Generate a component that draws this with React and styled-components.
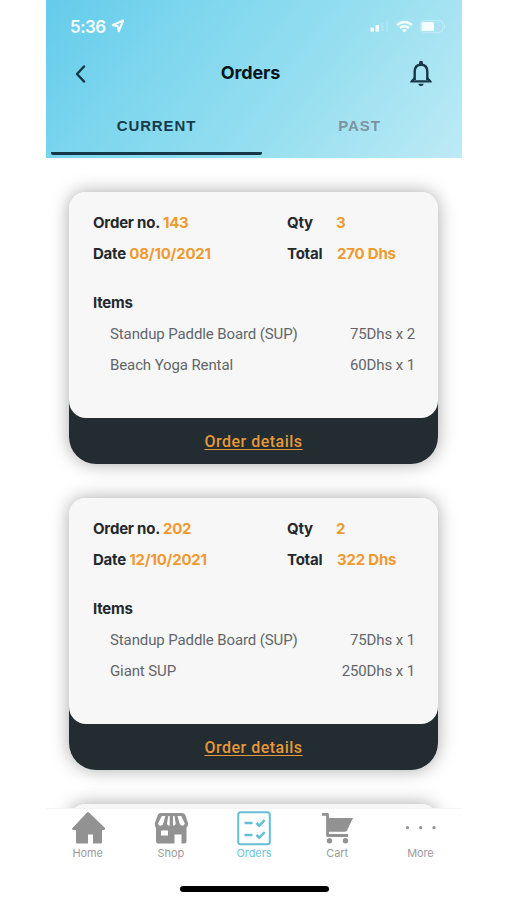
import React from "react";
import styled, { createGlobalStyle } from "styled-components";

const GlobalStyle = createGlobalStyle`
  *, *::before, *::after { box-sizing: border-box; }
  body { margin: 0; background: #fff; }
`;

const Page = styled.div`
  height: 900px;
  padding-left: 46px;
  background: #fff;
  overflow: hidden;
  font-family: Roboto, "Liberation Sans", sans-serif;
`;

const Phone = styled.main`
  display: flex;
  flex-direction: column;
  width: 416px;
  height: 900px;
`;

const Header = styled.header`
  flex: none;
  height: 158px;
  background: linear-gradient(128deg, #64cbea 0%, #7dd6ee 28%, #97dff0 62%, #bdeaf5 100%);
`;

const StatusBar = styled.div`
  display: flex;
  align-items: center;
  height: 52px;
  padding: 0 16px 0 24px;
  color: #f4fcff;
`;

const Clock = styled.span`
  width: 41px;
  padding-top: 1px;
  font: 600 17px/20px Inter, sans-serif;
  letter-spacing: -0.55px;
  white-space: nowrap;
`;

const StatusIcons = styled.div`
  display: flex;
  align-items: center;
  gap: 7px;
  margin-left: auto;
`;

const NavBar = styled.div`
  display: grid;
  grid-template-columns: 60px 1fr 60px;
  align-items: center;
  height: 42px;
  padding: 0 7px 0 0;
`;

const IconButton = styled.button`
  display: flex;
  justify-content: ${(p) => (p.$end ? "flex-end" : "flex-start")};
  padding: ${(p) => (p.$end ? "0 23px 0 0" : "2px 0 0 28px")};
  border: 0;
  background: none;
  color: #183848;
`;

const Title = styled.h1`
  margin: 0;
  font: 700 18px/24px Inter, sans-serif;
  letter-spacing: -0.15px;
  text-align: center;
  color: #07141c;
`;

const Tabs = styled.div`
  display: flex;
  height: 61px;
  padding: 0 5px;
`;

const Tab = styled.button`
  width: ${(p) => (p.$active ? "211px" : "195px")};
  padding: ${(p) => (p.$active ? "6px 0 0" : "3px 0 0")};
  border: 0;
  border-bottom: ${(p) => (p.$active ? "3px solid #153747" : "0")};
  border-radius: 0 0 2px 2px;
  background: none;
  font: 700 15px/18px "Liberation Sans", sans-serif;
  letter-spacing: 0.9px;
  color: ${(p) => (p.$active ? "#183b4b" : "#7f929e")};
`;

const OrderList = styled.section`
  flex: none;
  display: flex;
  flex-direction: column;
  gap: 34px;
  height: 650px;
  padding: 34px 24px 0 23px;
  overflow: hidden;
`;

const Card = styled.article`
  flex: none;
  width: 369px;
  height: 272px;
  border-radius: 17px 17px 27px 27px;
  background: linear-gradient(#f7f7f7 50%, #222c31 50%);
  box-shadow: 0 0 18px rgba(0, 0, 0, 0.34);
`;

const CardBody = styled.div`
  height: 226px;
  padding: 16px 23px 0 24px;
  border-radius: 17px;
  background: #f7f7f7;
`;

const Facts = styled.div`
  display: grid;
  grid-template-columns: 194px 1fr;
  margin-bottom: 18px;
`;

const Fact = styled.div`
  display: flex;
  font: 700 15px/30px Inter, sans-serif;
  height: 31px;
  letter-spacing: -0.21px;
  white-space: pre;
  color: #23292d;
`;

const FactLabel = styled.span`
  width: ${(p) => (p.$width ? `${p.$width}px` : "auto")};
`;

const FactValue = styled.span`
  color: #f0992f;
`;

const ItemsHeading = styled.h2`
  height: 31px;
  margin: 0;
  font: 700 15px/30px Inter, sans-serif;
  letter-spacing: -0.21px;
  color: #23292d;
`;

const ItemRow = styled.div`
  display: flex;
  justify-content: space-between;
  padding-left: 17px;
  font-size: 15px;
  line-height: 31px;
  letter-spacing: -0.11px;
  color: #62666a;
`;

const CardFooter = styled.div`
  display: flex;
  justify-content: center;
  height: 46px;
`;

const DetailsLink = styled.a`
  font: 500 16px/47px Roboto, sans-serif;
  letter-spacing: 0.5px;
  text-decoration: underline;
  text-decoration-thickness: 1px;
  text-underline-offset: 2px;
  text-decoration-skip-ink: none;
  color: #e6983a;
`;

const BottomBar = styled.nav`
  flex: none;
  display: grid;
  grid-template-columns: repeat(5, 1fr);
  height: 74px;
  border-top: 1px solid #f4f4f4;
  background: #fff;
`;

const BottomItem = styled.a`
  display: flex;
  flex-direction: column;
  align-items: center;
  padding-top: 2px;
  font: 400 11px/15px Inter, sans-serif;
  letter-spacing: -0.1px;
  color: ${(p) => (p.$active ? "#70c5da" : "#9b9b9b")};

  svg {
    display: block;
    color: ${(p) => (p.$active ? "#65bdd7" : "#929292")};
  }
`;

const HomeIndicator = styled.div`
  align-self: center;
  width: 149px;
  height: 6px;
  margin-top: 4px;
  border-radius: 3px;
  background: #000;
`;

const LocationIcon = () => (
  <svg width="14" height="14" viewBox="0 0 14 14" fill="none" stroke="currentColor" strokeWidth="2.2" strokeLinejoin="round">
    <path d="M12.2 1.600 1.800 6.100l5 1.100 1 5z" />
  </svg>
);

const SignalIcon = () => (
  <svg width="19" height="12" viewBox="0 0 19 12" fill="currentColor">
    <rect x="0.5" y="7.500" width="3.500" height="4.200" rx="1" />
    <rect x="5.500" y="5" width="3.700" height="6.700" rx="1" />
    <rect x="11" y="2.700" width="2.500" height="9" rx="1" opacity=".22" />
    <rect x="16" y="0" width="2.200" height="11.700" rx="1" opacity=".14" />
  </svg>
);

const WifiIcon = () => (
  <svg width="17" height="13" viewBox="0 0 17 13" fill="none" stroke="currentColor" strokeWidth="2.5">
    <path d="M1 5.100C5.200.9 11.800.9 16 5.100M4 8c2.500-2.400 6.500-2.400 9 0" />
    <path d="M6 9.800c1.500-1.300 3.500-1.300 5 0l-2.500 2.700z" fill="currentColor" stroke="none" />
  </svg>
);

const BatteryIcon = () => (
  <svg width="26" height="13" viewBox="0 0 26 13" fill="none">
    <rect x=".6" y=".6" width="22.300" height="11.800" rx="3.500" stroke="currentColor" opacity=".35" />
    <rect x="1.500" y="2" width="12.500" height="9" rx="1.600" fill="currentColor" />
    <path d="M24.200 4.200c1.600.7 1.600 3.900 0 4.600z" fill="currentColor" opacity=".5" />
  </svg>
);

const BackIcon = () => (
  <svg width="13" height="20" viewBox="0 0 13 20" fill="none" stroke="currentColor" strokeWidth="2.5" strokeLinecap="round" strokeLinejoin="round">
    <path d="M10 2.500 3 10l7 7.500" />
  </svg>
);

const BellIcon = () => (
  <svg width="22" height="27" viewBox="0 0 22 27" fill="none">
    <path d="M4.700 20v-8.500C4.700 7.200 7.200 4.700 11 4.700s6.300 2.500 6.300 6.800V20" stroke="currentColor" strokeWidth="2.400" />
    <path d="M4 17.200 .3 21.200v1.300h21.400v-1.300L18 17.200v3H4zM9 4.300V2.800a2 2 0 0 1 4 0v1.500zM8.300 23.700h5.400c-.4 1.700-1.300 2.300-2.700 2.300s-2.300-.6-2.700-2.300z" fill="currentColor" />
  </svg>
);

const HomeIcon = () => (
  <svg width="34" height="35" viewBox="0 0 34 35">
    <path d="M18 1.400 34 17q.9 2-1.500 2H31v12.200q0 1.300-1.300 1.300H22v-9h-5v9H6.300Q5 32.500 5 31.200V19H2.800Q.2 19 1.500 17L16 1.400q1-.8 2 0z" fill="currentColor" />
  </svg>
);

const ShopIcon = () => (
  <svg width="34" height="35" viewBox="0 0 34 35">
    <path d="M7 2h21q2.500 0 3.300 2L34 12q.4 3-1.500 4.400V30.500q0 2-2 2H27.500v-9h-7v9H4q-2 0-2-2V16.900Q.3 15 .9 12L3.800 4Q4.600 2 7 2z" fill="currentColor" />
    <path d="M7.800 5 4 12.500q.5 2.600 3 2.100 2-.4 2.400-2.500L11.300 5zM14.300 5l-1.300 7.800q.4 1.900 2.700 1.900V5zM19 5v9.700q2.300 0 2.700-1.900L20.500 5zM23.500 5l2 7.100q.5 2.100 2.300 2.500 2.500.4 3-2.100L27.300 5z" fill="#fff" />
    <rect x="7" y="19.500" width="7" height="5" fill="#fff" />
  </svg>
);

const OrdersIcon = () => (
  <svg width="34" height="35" viewBox="0 0 34 35" fill="none" stroke="currentColor" strokeWidth="2">
    <rect x="1.200" y="1.200" width="31.600" height="32" rx="2.500" />
    <path d="M7.500 12H15.500M7.500 24H15.500M19.500 12l2.700 2.700 5.500-5.500M19.500 24l2.700 2.700 5.500-5.500" strokeWidth="2.500" />
  </svg>
);

const CartIcon = () => (
  <svg width="34" height="35" viewBox="0 0 34 35" fill="none">
    <path d="M2 3.300h5.500v21.200H28" stroke="currentColor" strokeWidth="2.800" strokeLinejoin="round" />
    <path d="M8 7h25l-6 12.500q-.7 1.300-2 1.300H8z" fill="currentColor" />
    <circle cx="9.500" cy="29.700" r="2.700" fill="currentColor" />
    <circle cx="25.500" cy="29.700" r="2.700" fill="currentColor" />
  </svg>
);

const MoreIcon = () => (
  <svg width="34" height="35" viewBox="0 0 34 35" fill="currentColor">
    <circle cx="4.500" cy="16.700" r="1.600" />
    <circle cx="17.700" cy="16.700" r="1.600" />
    <circle cx="31" cy="16.700" r="1.600" />
  </svg>
);

const orders = [
  {
    number: "143",
    date: "08/10/2021",
    quantity: 3,
    total: "270 Dhs",
    items: [
      { name: "Standup Paddle Board (SUP)", price: "75Dhs x 2" },
      { name: "Beach Yoga Rental", price: "60Dhs x 1" },
    ],
  },
  {
    number: "202",
    date: "12/10/2021",
    quantity: 2,
    total: "322 Dhs",
    items: [
      { name: "Standup Paddle Board (SUP)", price: "75Dhs x 1" },
      { name: "Giant SUP", price: "250Dhs x 1" },
    ],
  },
];

const destinations = [
  { label: "Home", Icon: HomeIcon },
  { label: "Shop", Icon: ShopIcon },
  { label: "Orders", Icon: OrdersIcon, active: true },
  { label: "Cart", Icon: CartIcon },
  { label: "More", Icon: MoreIcon },
];

function OrderCard({ order }) {
  return (
    <Card>
      <CardBody>
        <Facts>
          <Fact>
            <FactLabel>Order no. </FactLabel>
            <FactValue>{order.number}</FactValue>
          </Fact>
          <Fact>
            <FactLabel $width={49}>Qty</FactLabel>
            <FactValue>{order.quantity}</FactValue>
          </Fact>
          <Fact>
            <FactLabel>Date </FactLabel>
            <FactValue>{order.date}</FactValue>
          </Fact>
          <Fact>
            <FactLabel $width={50}>Total</FactLabel>
            <FactValue>{order.total}</FactValue>
          </Fact>
        </Facts>
        <ItemsHeading>Items</ItemsHeading>
        {order.items.map((item) => (
          <ItemRow key={item.name}>
            <span>{item.name}</span>
            <span>{item.price}</span>
          </ItemRow>
        ))}
      </CardBody>
      <CardFooter>
        <DetailsLink>Order details</DetailsLink>
      </CardFooter>
    </Card>
  );
}

export default function App() {
  return (
    <Page>
      <GlobalStyle />
      <Phone>
        <Header>
          <StatusBar>
            <Clock>5:36</Clock>
            <LocationIcon />
            <StatusIcons>
              <SignalIcon />
              <WifiIcon />
              <BatteryIcon />
            </StatusIcons>
          </StatusBar>
          <NavBar>
            <IconButton aria-label="Back"><BackIcon /></IconButton>
            <Title>Orders</Title>
            <IconButton $end aria-label="Notifications"><BellIcon /></IconButton>
          </NavBar>
          <Tabs>
            <Tab $active>CURRENT</Tab>
            <Tab>PAST</Tab>
          </Tabs>
        </Header>
        <OrderList>
          {orders.map((order) => (
            <OrderCard key={order.number} order={order} />
          ))}
          <Card><CardBody /></Card>
        </OrderList>
        <BottomBar>
          {destinations.map(({ label, Icon, active }) => (
            <BottomItem key={label} $active={active}>
              <Icon />
              {label}
            </BottomItem>
          ))}
        </BottomBar>
        <HomeIndicator />
      </Phone>
    </Page>
  );
}
